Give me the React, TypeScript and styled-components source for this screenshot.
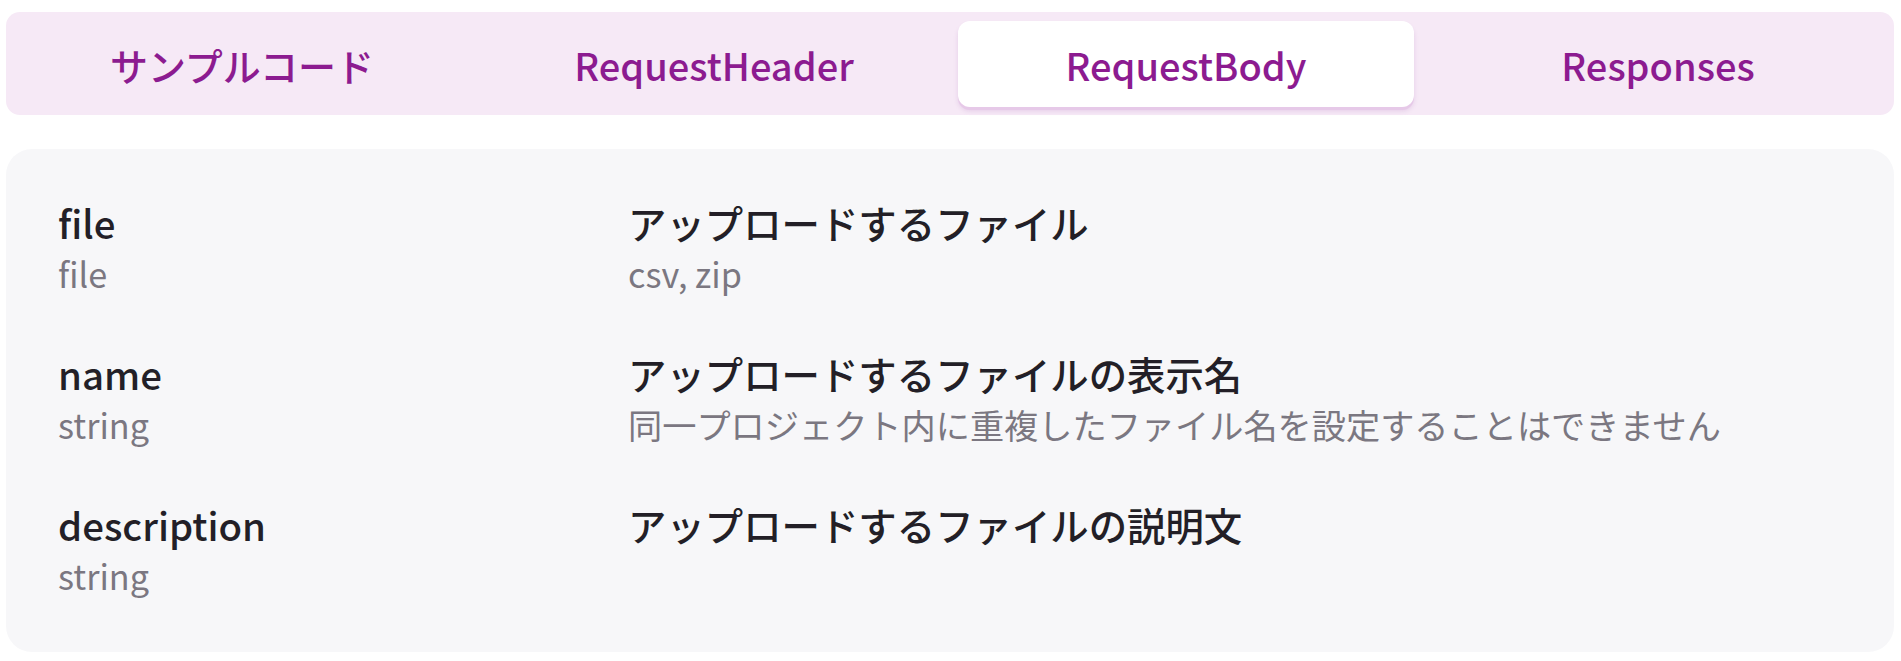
import React, { useState } from "react";
import styled, { createGlobalStyle } from "styled-components";

const GlobalStyle = createGlobalStyle`
  html, body { margin: 0; padding: 0; background: #ffffff; }
  body {
    font-family: "Noto Sans CJK JP", "Noto Sans", sans-serif;
    -webkit-font-smoothing: antialiased;
  }
`;

const Page = styled.div`
  padding: 12px 7px 10px 6px;
  display: flex;
  flex-direction: column;
  gap: 34px;
`;

const TabBar = styled.div`
  display: grid;
  grid-template-columns: repeat(4, 1fr);
  gap: 16px;
  padding: 9px 8px 8px;
  background: #f6e9f6;
  border-radius: 14px;
`;

const Tab = styled.button<{ $active?: boolean }>`
  height: 86px;
  border: none;
  border-radius: 12px;
  background: ${(p) => (p.$active ? "#ffffff" : "transparent")};
  box-shadow: ${(p) => (p.$active ? "0 3px 0 #e6c9e8, 0 4px 4px rgba(180,120,190,0.25)" : "none")};
  color: #8c1b90;
  font-family: "Noto Sans CJK JP", "Noto Sans", sans-serif;
  font-size: 38px;
  font-weight: 500;
  cursor: pointer;
  display: flex;
  align-items: center;
  justify-content: center;
  padding: 0;
`;

const Card = styled.div`
  background: #f7f7f9;
  border-radius: 26px;
  padding: 48px 52px 51px;
  display: flex;
  flex-direction: column;
  gap: 49px;
`;

const Row = styled.div`
  display: grid;
  grid-template-columns: 570px 1fr;
`;

const Cell = styled.div`
  display: flex;
  flex-direction: column;
`;

const Primary = styled.div`
  font-size: 38.4px;
  line-height: 51px;
  font-weight: 500;
  color: #231f27;
`;

const Secondary = styled.div`
  font-size: 34.2px;
  line-height: 51px;
  font-weight: 400;
  color: #7b7781;
`;

const tabs = ["サンプルコード", "RequestHeader", "RequestBody", "Responses"];

const fields = [
  { name: "file", type: "file", desc: "アップロードするファイル", note: "csv, zip" },
  {
    name: "name",
    type: "string",
    desc: "アップロードするファイルの表示名",
    note: "同一プロジェクト内に重複したファイル名を設定することはできません",
  },
  { name: "description", type: "string", desc: "アップロードするファイルの説明文", note: "" },
];

export default function App() {
  const [active, setActive] = useState(2);
  return (
    <>
      <GlobalStyle />
      <Page>
        <TabBar>
          {tabs.map((t, i) => (
            <Tab key={t} $active={i === active} onClick={() => setActive(i)}>
              {t}
            </Tab>
          ))}
        </TabBar>
        <Card>
          {fields.map((f) => (
            <Row key={f.name}>
              <Cell>
                <Primary>{f.name}</Primary>
                <Secondary>{f.type}</Secondary>
              </Cell>
              <Cell>
                <Primary>{f.desc}</Primary>
                {f.note && <Secondary>{f.note}</Secondary>}
              </Cell>
            </Row>
          ))}
        </Card>
      </Page>
    </>
  );
}
